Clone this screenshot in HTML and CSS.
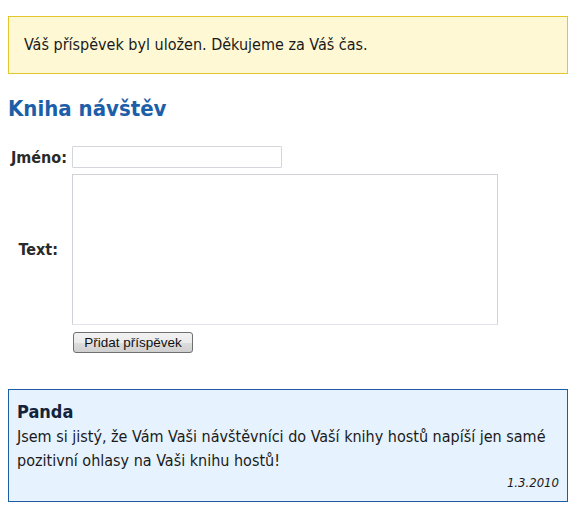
FILE: index.html
```html
<!DOCTYPE html>
<html lang="cs">
<head>
<meta charset="utf-8">
<link rel="stylesheet" href="styles.css">
</head>
<body>
<div class="notice">Váš příspěvek byl uložen. Děkujeme za Váš čas.</div>
<h1 class="title">Kniha návštěv</h1>
<form class="form">
  <div class="row">
    <label class="label" for="name">Jméno:</label>
    <input class="input" id="name" type="text">
  </div>
  <div class="row row-text">
    <label class="label" for="text">Text:</label>
    <textarea class="textarea" id="text"></textarea>
  </div>
  <div class="row">
    <span class="label"></span>
    <button class="button" type="button">Přidat příspěvek</button>
  </div>
</form>
<div class="entry">
  <div class="entry-name">Panda</div>
  <div class="entry-text">Jsem si jistý, že Vám Vaši návštěvníci do Vaší knihy hostů napíší jen samé pozitivní ohlasy na Vaši knihu hostů!</div>
  <div class="entry-date">1.3.2010</div>
</div>
</body>
</html>
```
FILE: styles.css
```css
html, body { background: #fff; }
body {
  margin: 8px;
  font-family: "DejaVu Sans Condensed", "DejaVu Sans", sans-serif;
  font-size: 16px;
  color: #222;
}
.notice {
  margin-top: 8px;
  box-sizing: border-box;
  height: 58px;
  display: flex;
  align-items: center;
  padding: 0 15px 1px 15px;
  background: #fff8d5;
  border: 1px solid #e3c52c;
  color: #1a1a1a;
}
.title {
  margin: 20px 0 22px 0;
  font-size: 22px;
  line-height: 30px;
  font-weight: bold;
  color: #1d5ea8;
}
.form {
  display: flex;
  flex-direction: column;
  gap: 6px;
  margin: 0 0 36px 0;
}
.row {
  display: flex;
  align-items: center;
  gap: 5px;
}
.label {
  width: 59px;
  text-align: right;
  font-weight: bold;
  color: #2a2a2a;
}
.row-text .label { padding-right: 9px; width: 50px; }
.input {
  margin: 0;
  width: 210px;
  height: 22px;
  box-sizing: border-box;
  border: 1px solid #d4d6dc;
  border-radius: 1px;
  background: #fff;
}
.textarea {
  margin: 0;
  width: 426px;
  height: 151px;
  box-sizing: border-box;
  border: 1px solid #d0d2d8;
  border-bottom-color: #e2e4ea;
  resize: none;
  background: #fff;
}
.button {
  margin: 1px 0 0 1px;
  width: 120px;
  height: 21px;
  padding: 0;
  font-family: "Liberation Sans", Arial, sans-serif;
  font-size: 13.5px;
  color: #111;
  border: 1px solid #707070;
  border-radius: 3px;
  background: linear-gradient(#f2f2f2 0%, #ebebeb 50%, #dddddd 51%, #cfcfcf 100%);
}
.entry {
  border: 1px solid #1f5ca6;
  background: #e6f2fd;
  padding: 9px 8px 8px 8px;
  color: #1a1a1a;
}
.entry-name {
  font-size: 18px;
  font-weight: bold;
  line-height: 26px;
  color: #13233c;
}
.entry-text {
  line-height: 24px;
}
.entry-date {
  text-align: right;
  font-style: italic;
  font-size: 13px;
  line-height: 20px;
}
```
